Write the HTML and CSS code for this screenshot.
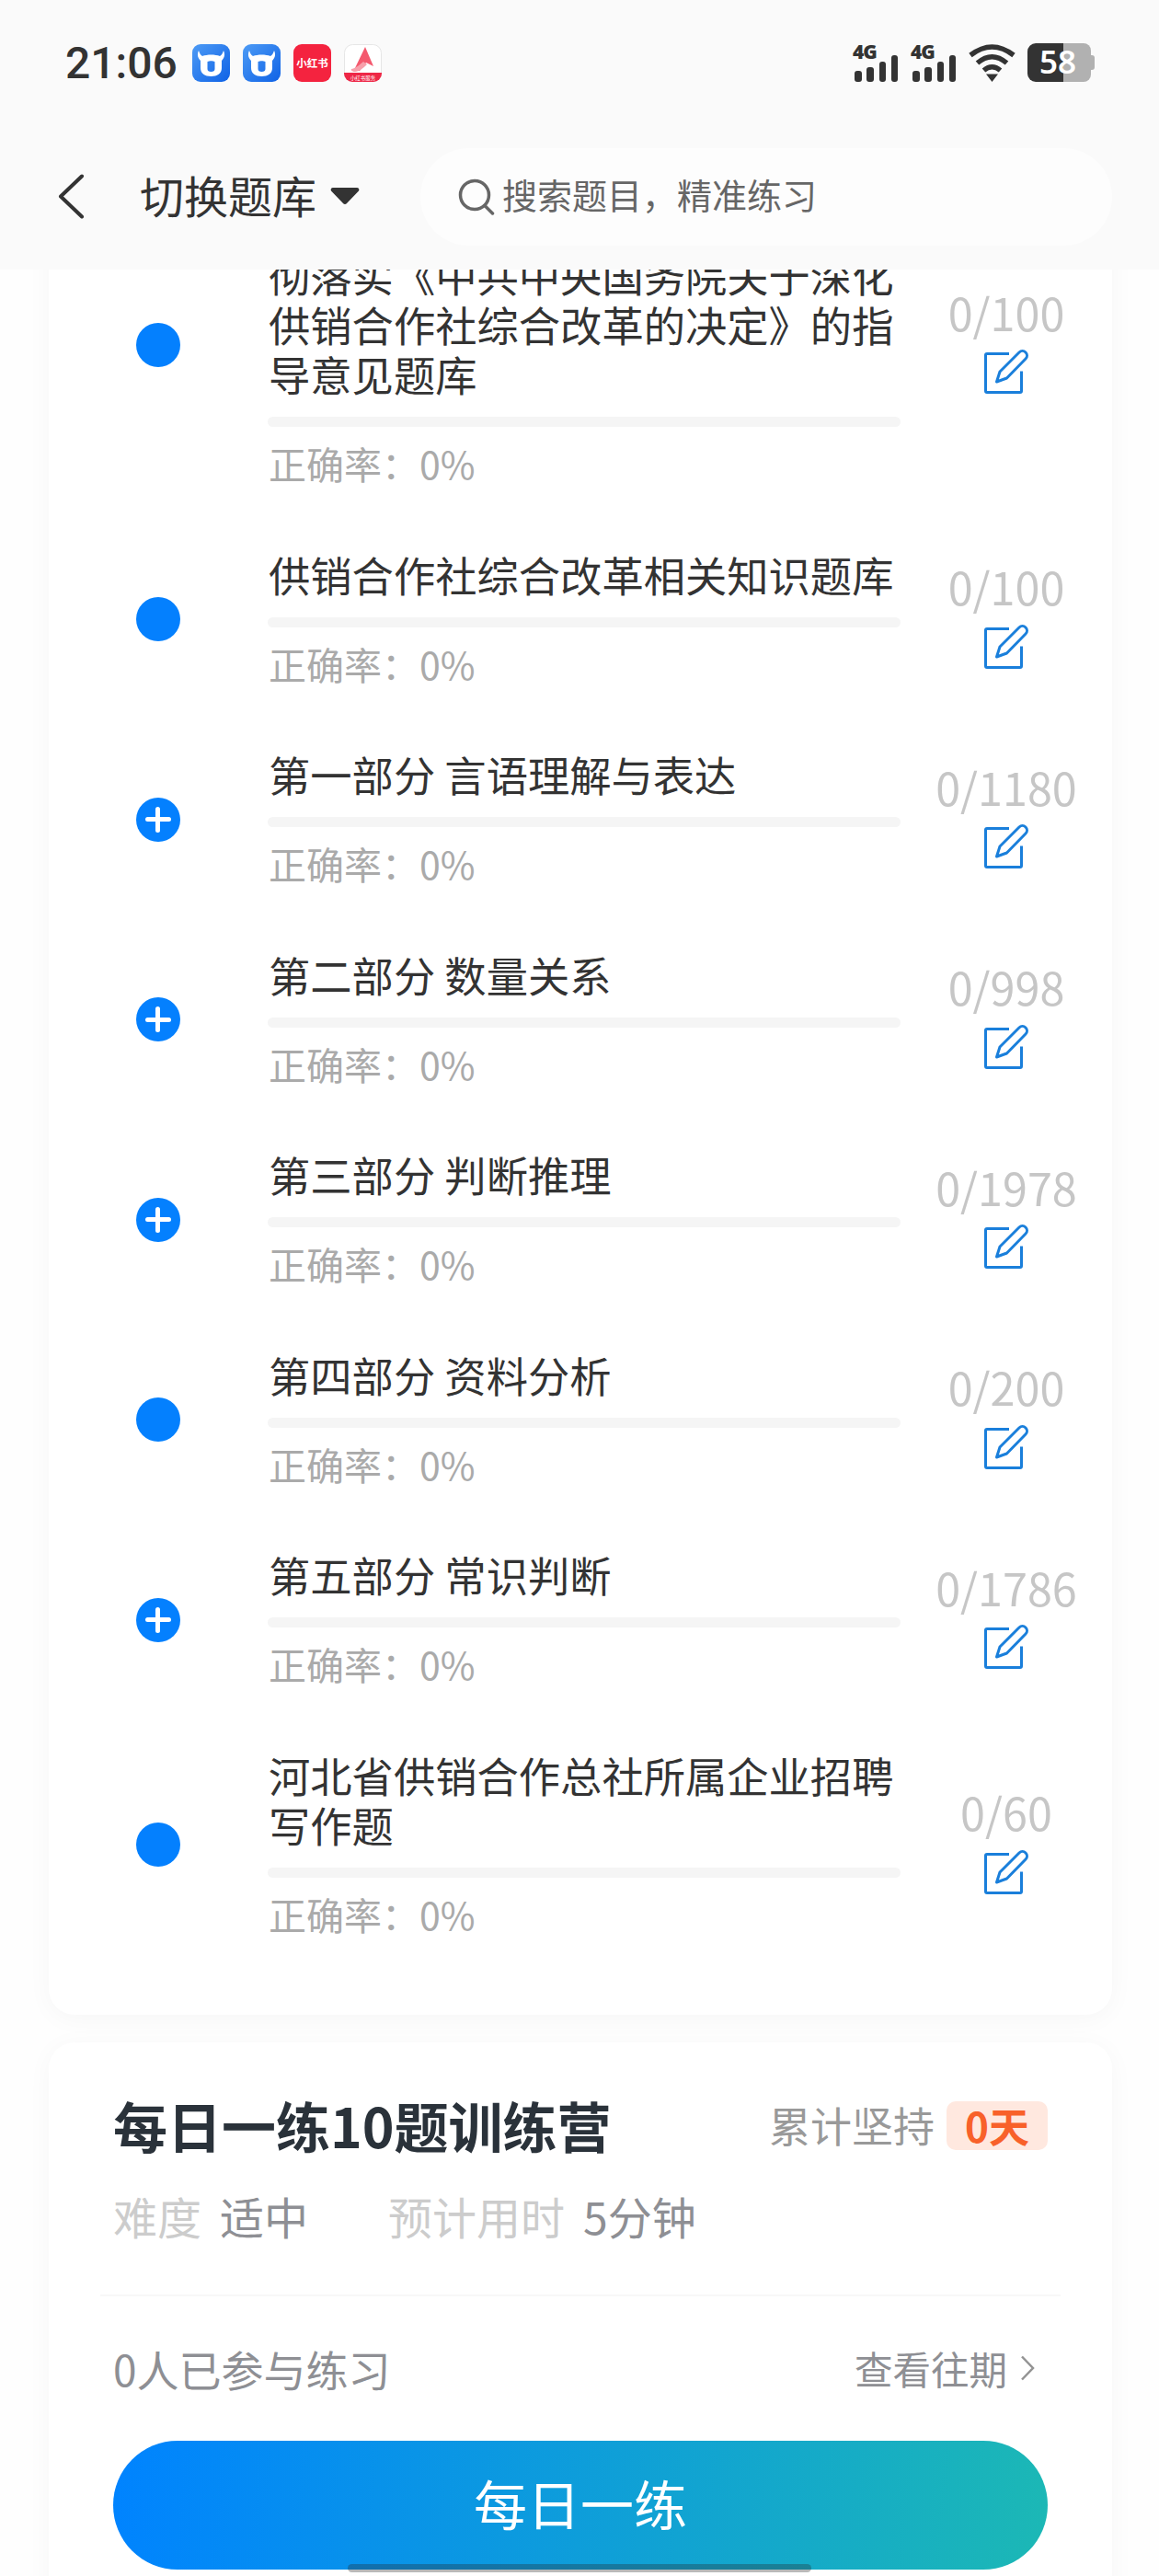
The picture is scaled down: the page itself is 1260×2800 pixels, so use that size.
FILE: index.html
```html
<!DOCTYPE html>
<html lang="zh-CN">
<head>
<meta charset="utf-8">
<title>切换题库</title>
<link rel="stylesheet" href="styles.css">
</head>
<body>
<div class="page">
  <header class="header">
    <div class="status">
      <span class="time">21:06</span>
      <div class="apps">
        <svg class="app" viewBox="0 0 41 41"><defs><linearGradient id="b" x1="0" y1="0" x2="1" y2="1"><stop offset="0" stop-color="#4d9bf5"/><stop offset="1" stop-color="#0f62e6"/></linearGradient></defs><rect width="41" height="41" rx="9" fill="url(#b)"/><path fill="#fff" fill-rule="evenodd" d="M7 7c1 3 2 5 4 6 5-2 14-2 19 0 2-1 3-3 4-6 2 4 1 8-2 11v8c0 6-5 9-11.500 9S9 32 9 26v-8C6 15 5 11 7 7zm9.500 12v8c0 2 1.500 3 4 3s4-1 4-3v-8c-2-1-6-1-8 0z"/></svg>
        <svg class="app" viewBox="0 0 41 41"><rect width="41" height="41" rx="9" fill="url(#b)"/><path fill="#fff" fill-rule="evenodd" d="M7 7c1 3 2 5 4 6 5-2 14-2 19 0 2-1 3-3 4-6 2 4 1 8-2 11v8c0 6-5 9-11.500 9S9 32 9 26v-8C6 15 5 11 7 7zm9.500 12v8c0 2 1.500 3 4 3s4-1 4-3v-8c-2-1-6-1-8 0z"/></svg>
        <svg class="app" viewBox="0 0 41 41"><rect width="41" height="41" rx="9" fill="#f4233f"/><text x="20.500" y="25" class="xhs" text-anchor="middle">小红书</text></svg>
        <svg class="app" viewBox="0 0 41 41"><rect x=".5" y=".5" width="40" height="40" rx="9" fill="#fff" stroke="#e6e6e6"/><path d="M0 31h41v1a9 9 0 0 1-9 9H9a9 9 0 0 1-9-9z" fill="#ee2746"/><path d="M23 3l9 21-8-4-7 9-6-1z" fill="#f4596e"/><path d="M8 27c6-1 10-6 13-8l4 3c-4 4-9 8-13 8-3 0-5-2-4-3z" fill="#f7a0ab"/><text x="20.500" y="38.500" class="appsub" text-anchor="middle">小红书服务</text></svg>
      </div>
      <div class="indicators">
        <svg class="signal" viewBox="0 0 50 42"><text x="0" y="16.500" class="net">4G</text><rect x="2" y="30" width="8" height="12" rx="3"/><rect x="15" y="26" width="8" height="16" rx="3"/><rect x="29" y="20" width="7" height="22" rx="3"/><rect x="42" y="13" width="7" height="29" rx="3"/></svg>
        <svg class="signal" viewBox="0 0 50 42"><text x="0" y="16.500" class="net">4G</text><rect x="2" y="30" width="8" height="12" rx="3"/><rect x="15" y="26" width="8" height="16" rx="3"/><rect x="29" y="20" width="7" height="22" rx="3"/><rect x="42" y="13" width="7" height="29" rx="3"/></svg>
        <svg class="wifi" viewBox="0 0 51 42"><g fill="none" stroke="#333" stroke-width="5.500"><path d="M2 13Q25.500-5 49 13"/><path d="M9.500 21.500Q25.500 8 41.500 21.500"/><path d="M16.500 29.500Q25.500 22 34.500 29.500"/></g><path d="M19 33.500h13L25.500 42z" fill="#333"/></svg>
        <svg class="battery" viewBox="0 0 73 42"><path d="M39 0h22a8 8 0 0 1 8 8v26a8 8 0 0 1-8 8H39z" fill="#b1b1b1"/><path d="M69 13h1a3 3 0 0 1 3 3v10a3 3 0 0 1-3 3h-1z" fill="#b1b1b1"/><path d="M39 0H9a9 9 0 0 0-9 9v24a9 9 0 0 0 9 9h30z" fill="#333"/><text x="33" y="33" class="batt" text-anchor="middle">58</text></svg>
      </div>
    </div>
    <nav class="nav">
      <svg class="back" viewBox="0 0 30 49"><path d="M27 2.500L4 24.500l23 22" fill="none" stroke="#333" stroke-width="4" stroke-linecap="round" stroke-linejoin="round"/></svg>
      <span class="switch">切换题库</span>
      <svg class="caret" viewBox="0 0 32 20"><path d="M3 1h26c2 0 3 2 2 3.500L18 18c-1 1.300-3 1.300-4 0L1 4.500C0 3 1 1 3 1z" fill="#333"/></svg>
      <div class="search">
        <svg class="loupe" viewBox="0 0 40 40"><circle cx="18" cy="18" r="15.500" fill="none" stroke="#666" stroke-width="3.500"/><path d="M29 29.500l8.500 8.500" stroke="#666" stroke-width="3.500" stroke-linecap="round"/></svg>
        <span class="placeholder">搜索题目，精准练习</span>
      </div>
    </nav>
  </header>

  <main class="main">
    <section class="card list">
      <div class="row">
        <span class="dot"></span>
        <div class="body">
          <p class="title clipped">彻落实《中共中央国务院关于深化供销合作社综合改革的决定》的指导意见题库</p>
          <div class="bar"></div>
          <p class="rate">正确率：0%</p>
        </div>
        <div class="score"><span class="count">0/100</span><svg class="edit" viewBox="0 0 49 49"><use href="#pen"/></svg></div>
      </div>
      <div class="row">
        <span class="dot"></span>
        <div class="body">
          <p class="title">供销合作社综合改革相关知识题库</p>
          <div class="bar"></div>
          <p class="rate">正确率：0%</p>
        </div>
        <div class="score"><span class="count">0/100</span><svg class="edit" viewBox="0 0 49 49"><use href="#pen"/></svg></div>
      </div>
      <div class="row">
        <span class="dot plus"></span>
        <div class="body">
          <p class="title">第一部分 言语理解与表达</p>
          <div class="bar"></div>
          <p class="rate">正确率：0%</p>
        </div>
        <div class="score"><span class="count">0/1180</span><svg class="edit" viewBox="0 0 49 49"><use href="#pen"/></svg></div>
      </div>
      <div class="row">
        <span class="dot plus"></span>
        <div class="body">
          <p class="title">第二部分 数量关系</p>
          <div class="bar"></div>
          <p class="rate">正确率：0%</p>
        </div>
        <div class="score"><span class="count">0/998</span><svg class="edit" viewBox="0 0 49 49"><use href="#pen"/></svg></div>
      </div>
      <div class="row">
        <span class="dot plus"></span>
        <div class="body">
          <p class="title">第三部分 判断推理</p>
          <div class="bar"></div>
          <p class="rate">正确率：0%</p>
        </div>
        <div class="score"><span class="count">0/1978</span><svg class="edit" viewBox="0 0 49 49"><use href="#pen"/></svg></div>
      </div>
      <div class="row">
        <span class="dot"></span>
        <div class="body">
          <p class="title">第四部分 资料分析</p>
          <div class="bar"></div>
          <p class="rate">正确率：0%</p>
        </div>
        <div class="score"><span class="count">0/200</span><svg class="edit" viewBox="0 0 49 49"><use href="#pen"/></svg></div>
      </div>
      <div class="row">
        <span class="dot plus"></span>
        <div class="body">
          <p class="title">第五部分 常识判断</p>
          <div class="bar"></div>
          <p class="rate">正确率：0%</p>
        </div>
        <div class="score"><span class="count">0/1786</span><svg class="edit" viewBox="0 0 49 49"><use href="#pen"/></svg></div>
      </div>
      <div class="row">
        <span class="dot"></span>
        <div class="body">
          <p class="title">河北省供销合作总社所属企业招聘写作题</p>
          <div class="bar"></div>
          <p class="rate">正确率：0%</p>
        </div>
        <div class="score"><span class="count">0/60</span><svg class="edit" viewBox="0 0 49 49"><use href="#pen"/></svg></div>
      </div>
    </section>

    <section class="card daily">
      <div class="daily-head">
        <h2 class="daily-title">每日一练10题训练营</h2>
        <div class="streak"><span class="streak-label">累计坚持</span><span class="badge">0天</span></div>
      </div>
      <div class="meta">
        <span class="meta-key">难度</span><span class="meta-val">适中</span>
        <span class="meta-key second">预计用时</span><span class="meta-val">5分钟</span>
      </div>
      <div class="divider"></div>
      <div class="foot">
        <span class="joined">0人已参与练习</span>
        <span class="history">查看往期<svg class="more" viewBox="0 0 16 28"><path d="M2 1.500L14 14 2 26.500" fill="none" stroke="#939393" stroke-width="2.500"/></svg></span>
      </div>
      <button class="cta" type="button">每日一练</button>
    </section>
  </main>
  <div class="home-bar"></div>
</div>
<svg class="defs" width="0" height="0"><defs><g id="pen" fill="none" stroke="#1a7fdb" stroke-width="3" stroke-linejoin="round"><path d="M27 5.500H3a1.500 1.500 0 0 0-1.500 1.500v39a1.500 1.500 0 0 0 1.500 1.500h36a1.500 1.500 0 0 0 1.500-1.500V24.500"/><path d="M13.500 36l3.500-11L38 4c2-2 5-2 7 0 2 2 2 5 0 7L24.500 32z"/></g></defs></svg>
</body>
</html>
```
FILE: styles.css
```css
* { box-sizing: border-box; }
html, body { margin: 0; padding: 0; }
body {
  background: #fefefe;
  font-family: "Noto Sans CJK SC", "Noto Sans", sans-serif;
  color: #333;
}
p, h2 { margin: 0; }
.page { position: relative; width: 1260px; height: 2800px; overflow: hidden; }

.header { position: relative; z-index: 2; height: 293px; background: #fafafa; }
.status { display: flex; align-items: flex-start; height: 161px; padding: 47px 0 0 71px; }
.time { font-family: Roboto, sans-serif; font-weight: 500; font-size: 48px; line-height: 44px; width: 138px; color: #333; }
.apps { display: flex; margin-top: 1px; }
.app { display: block; width: 41px; height: 41px; margin-right: 14px; }
.xhs { font-size: 11.500px; font-weight: 700; fill: #fff; }
.appsub { font-size: 5.500px; fill: #fff; }
.indicators { display: flex; margin-left: auto; margin-right: 70px; }
.signal { display: block; width: 50px; height: 42px; fill: #333; margin-right: 13px; overflow: visible; }
.net { font-family: "Open Sans", sans-serif; font-weight: 800; font-size: 21px; letter-spacing: -1px; }
.wifi { display: block; width: 51px; height: 42px; margin-right: 13px; }
.battery { display: block; width: 73px; height: 42px; overflow: visible; }
.batt { font-family: "Noto Sans", sans-serif; font-weight: 600; font-size: 35px; fill: #fff; }

.nav { display: flex; align-items: center; height: 106px; padding-left: 62px; }
.back { display: block; width: 30px; height: 49px; margin-top: -2px; }
.switch { margin-left: 60px; margin-bottom: 6px; font-size: 48px; line-height: 60px; }
.caret { display: block; width: 32px; height: 20px; margin-left: 15px; margin-top: -2px; }
.search { display: flex; align-items: center; width: 752px; height: 106px; margin-left: 66px; padding-left: 41px; background: #fdfdfd; border-radius: 53px; }
.loupe { display: block; width: 40px; height: 40px; }
.placeholder { margin-left: 8px; margin-bottom: 6px; font-size: 38px; line-height: 50px; color: #666; }

.main { padding: 0 51px 0 53px; margin-top: -93px; }
.card { background: #fff; border-radius: 28px; box-shadow: 0 4px 28px rgba(0, 0, 0, .035); }
.list { display: flex; flex-direction: column; gap: 67.500px; padding: 20px 0 84px 94.500px; height: 1990px; }
.row { display: flex; align-items: center; }
.dot { flex: none; position: relative; width: 48px; height: 48px; margin-right: 95.500px; margin-bottom: 3px; border-radius: 50%; background: #0480fe; }
.plus::before, .plus::after { content: ""; position: absolute; background: #fff; border-radius: 3px; }
.plus::before { left: 10px; right: 10px; top: 21.500px; height: 5px; }
.plus::after { top: 10px; bottom: 10px; left: 21.500px; width: 5px; }
.body { flex: none; width: 688px; }
.title { margin-top: -3px; padding-left: 1px; font-size: 45.300px; line-height: 54px; color: #333; }
.clipped { padding-top: 54px; }
.bar { height: 11px; margin-top: 20px; border-radius: 6px; background: #f5f5f5; }
.rate { margin: 12px 0 2px; padding-left: 1px; font-size: 41px; line-height: 54px; color: #aaa; }
.score { flex: 1; display: flex; flex-direction: column; align-items: center; padding-bottom: 5.500px; }
.count { font-size: 48.500px; line-height: 40px; color: #c6c6c6; }
.edit { display: block; width: 49px; height: 49px; margin-top: 20.500px; overflow: visible; }

.daily { margin-top: 30px; padding: 60px 70px 60px; height: 700px; }
.daily-head { display: flex; align-items: center; justify-content: space-between; height: 60px; }
.daily-title { font-size: 59px; line-height: 60px; font-weight: 700; color: #2a323a; }
.streak { display: flex; align-items: center; }
.streak-label { font-size: 45px; line-height: 60px; color: #999; }
.badge { display: block; margin-left: 13px; padding: 0 20px; height: 53px; border-radius: 10px; background: #ffe8df; color: #f8612a; font-size: 44px; line-height: 53px; font-weight: 700; }
.meta { display: flex; align-items: center; height: 60px; margin-top: 38px; font-size: 48px; line-height: 60px; }
.meta-key { color: #ccc; }
.meta-val { margin-left: 20px; color: #8e8f94; }
.second { margin-left: 87px; }
.divider { height: 2px; margin: 56px -14px 0; background: #f8f8f8; }
.foot { display: flex; align-items: center; justify-content: space-between; height: 60px; margin-top: 48px; }
.joined { font-size: 46px; line-height: 60px; color: #8e8f94; }
.history { display: flex; align-items: center; font-size: 41.500px; line-height: 60px; color: #8e8f94; }
.more { display: block; width: 16px; height: 28px; margin-left: 14px; margin-right: 14px; }
.cta { display: block; width: 100%; height: 140px; margin-top: 49px; padding: 0 0 6px; border: 0; border-radius: 70px; background: linear-gradient(95deg, #0083ff, #1cb8b5); color: #fff; font-family: inherit; font-size: 58px; line-height: 134px; }

.home-bar { position: absolute; left: 378px; top: 2787px; width: 504px; height: 9px; border-radius: 5px; background: rgba(40, 40, 40, .32); }
.defs { position: absolute; }
```
